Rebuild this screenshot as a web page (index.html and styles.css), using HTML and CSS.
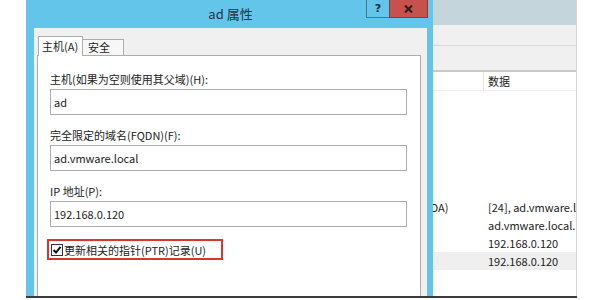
FILE: index.html
```html
<!DOCTYPE html>
<html>
<head>
    <meta charset="utf-8">
    <title>ad 属性</title>
    <link rel="stylesheet" href="styles.css">
</head>
<body>
    <div class="shot">
        <div class="dialog">
            <div class="titlebar">
                <span></span>
                <div class="title">ad 属性</div>
                <div class="buttons">
                    <span class="btn help">?</span>
                    <span class="btn close">
                        <svg width="9" height="8" viewBox="0 0 9 8">
                            <path d="M1 0.5 L8 7.5 M8 0.5 L1 7.5" stroke="#2b1b1b" stroke-width="2"/>
                        </svg>
                    </span>
                </div>
            </div>
            <div class="client">
                <div class="tabs">
                    <div class="tab active">主机(A)</div>
                    <div class="tab">安全</div>
                </div>
                <div class="panel">
                    <div class="label">主机(如果为空则使用其父域)(H):</div>
                    <div class="field">ad</div>
                    <div class="label">完全限定的域名(FQDN)(F):</div>
                    <div class="field">ad.vmware.local</div>
                    <div class="label">IP 地址(P):</div>
                    <div class="field">192.168.0.120</div>
                    <div class="check-row">
                        <span class="box">
                            <svg width="10" height="10" viewBox="0 0 10 10">
                                <path d="M1.5 5 L4 7.5 L8.5 1.8" fill="none" stroke="#111" stroke-width="2"/>
                            </svg>
                        </span>
                        <span>更新相关的指针(PTR)记录(U)</span>
                    </div>
                </div>
            </div>
        </div>
        <div class="behind">
            <div class="bh-top"></div>
            <div class="bh-bar"></div>
            <div class="bh-bar2"></div>
            <div class="colhead">
                <div class="cell"></div>
                <div class="cell">数据</div>
            </div>
            <div class="rows">
                <div class="row">
                    <div class="cell type">OA)</div>
                    <div class="cell">[24], ad.vmware.local.</div>
                </div>
                <div class="row">
                    <div class="cell type"></div>
                    <div class="cell">ad.vmware.local.</div>
                </div>
                <div class="row">
                    <div class="cell type"></div>
                    <div class="cell">192.168.0.120</div>
                </div>
                <div class="row selected">
                    <div class="cell type"></div>
                    <div class="cell">192.168.0.120</div>
                </div>
            </div>
        </div>
    </div>
</body>
</html>
```

FILE: styles.css
```css
body {
    margin: 0;
    width: 602px;
    height: 300px;
    overflow: hidden;
    background-color: #ffffff;
    font-family: "Noto Sans CJK SC", sans-serif;
    font-size: 11px;
    color: #222222;
}
.shot {
    display: flex;
    margin-left: 26px;
    width: 551px;
    height: 296px;
    border-bottom: 2px solid #3c3c3c;
    overflow: hidden;
}

/* dialog */
.dialog {
    display: flex;
    flex-direction: column;
    flex: none;
    width: 407px;
    padding: 0 6px 0 8px;
    box-sizing: border-box;
    background-color: #63c5ea;
}
.titlebar {
    display: grid;
    grid-template-columns: 1fr auto 1fr;
    align-items: start;
    height: 28px;
}
.title {
    margin-top: 5px;
    font-size: 13px;
    line-height: 18px;
    color: #1d3442;
}
.buttons {
    display: flex;
    justify-self: end;
    margin-right: -1px;
}
.btn {
    display: flex;
    align-items: center;
    justify-content: center;
    height: 18px;
    box-sizing: border-box;
    border: 1px solid #3d7d98;
    border-top: none;
}
.help {
    width: 24px;
    background-color: #63c5ea;
    font-family: "DejaVu Sans", sans-serif;
    font-weight: bold;
    font-size: 11px;
    color: #152b3c;
}
.close {
    width: 39px;
    margin-left: -1px;
    background-color: #c7514c;
    border-color: #8d3a36;
}
.client {
    display: flex;
    flex-direction: column;
    flex: 1;
    padding: 8px 6px 0 3px;
    background-color: #f0f0f0;
}
.tabs {
    display: flex;
    align-items: flex-end;
    margin-left: 1px;
}
.tab {
    height: 16px;
    box-sizing: border-box;
    border: 1px solid #adadad;
    border-bottom: none;
    background-color: #f7f7f7;
    line-height: 15px;
    width: 42px;
    padding-left: 5px;
}
.tab.active {
    position: relative;
    z-index: 1;
    width: 45px;
    height: 20px;
    margin-bottom: -1px;
    padding-left: 3px;
    background-color: #ffffff;
    line-height: 19px;
}
.tab + .tab {
    margin-left: -1px;
}
.panel {
    display: flex;
    flex-direction: column;
    flex: 1;
    padding: 15px 13px 0 12px;
    background-color: #ffffff;
    border: 1px solid #adadad;
    border-bottom: none;
}
.label {
    line-height: 16px;
    margin-bottom: 2px;
}
.field {
    height: 26px;
    box-sizing: border-box;
    padding-left: 3px;
    margin-bottom: 12px;
    border: 1px solid #acacac;
    line-height: 24px;
}
.check-row {
    display: flex;
    align-items: center;
    align-self: flex-start;
    gap: 1px;
    width: 176px;
    height: 21px;
    box-sizing: border-box;
    margin-left: -3px;
    padding-left: 2px;
    border: 2px solid #d8352f;
}
.box {
    display: flex;
    align-items: center;
    justify-content: center;
    width: 12px;
    height: 12px;
    box-sizing: border-box;
    border: 1px solid #333333;
    background-color: #ffffff;
}

/* window behind the dialog */
.behind {
    flex: none;
    width: 144px;
    box-sizing: border-box;
    border-right: 1px solid #d6d6d6;
    background-color: #ffffff;
}
.bh-top {
    height: 25px;
    background-color: #c4d5dc;
}
.bh-bar {
    height: 20px;
    background-color: #f0f0f0;
    border-bottom: 1px solid #d9d9d9;
}
.bh-bar2 {
    height: 24px;
    background-color: #f0f0f0;
    border-bottom: 2px solid #c9c9c9;
}
.colhead {
    display: grid;
    grid-template-columns: 51px 1fr;
    height: 18px;
    line-height: 18px;
    border-bottom: 1px solid #f0f0f0;
}
.colhead .cell:first-child {
    border-right: 1px solid #e3e3e3;
}
.cell {
    padding-left: 4px;
    white-space: nowrap;
    overflow: hidden;
}
.rows {
    margin-top: 107px;
}
.row {
    display: grid;
    grid-template-columns: 51px 1fr;
    height: 18px;
    line-height: 18px;
}
.row .type {
    padding-left: 0;
    text-indent: -3px;
}
.row.selected {
    background-color: #efefef;
}
```
